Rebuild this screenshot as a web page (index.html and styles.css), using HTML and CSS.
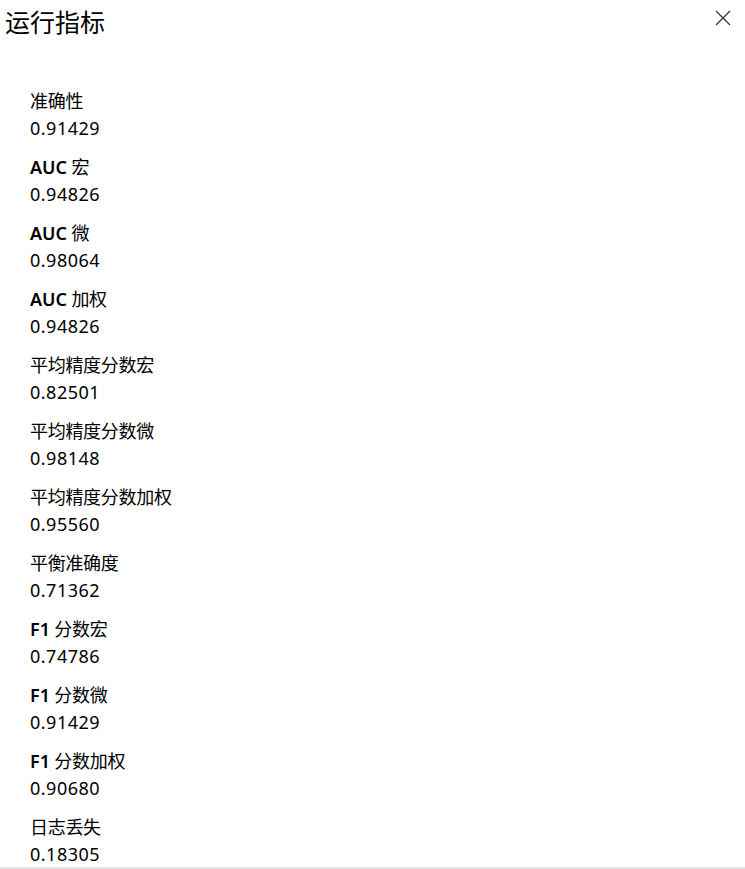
FILE: index.html
```html
<!DOCTYPE html>
<html lang="zh-CN">
<head>
<meta charset="utf-8">
<title>运行指标</title>
<link rel="stylesheet" href="styles.css">
</head>
<body>
<div class="panel">
  <div class="header">
    <h1 class="title">运行指标</h1>
    <button class="close" aria-label="关闭">
      <svg width="16" height="16" viewBox="0 0 16 16"><path d="M1 1L15 15M15 1L1 15" stroke="#323130" stroke-width="1.2" fill="none"/></svg>
    </button>
  </div>
  <div class="list">
    <div class="item"><div class="label">准确性</div><div class="value">0.91429</div></div>
    <div class="item"><div class="label"><span class="latin">AUC</span> 宏</div><div class="value">0.94826</div></div>
    <div class="item"><div class="label"><span class="latin">AUC</span> 微</div><div class="value">0.98064</div></div>
    <div class="item"><div class="label"><span class="latin">AUC</span> 加权</div><div class="value">0.94826</div></div>
    <div class="item"><div class="label">平均精度分数宏</div><div class="value">0.82501</div></div>
    <div class="item"><div class="label">平均精度分数微</div><div class="value">0.98148</div></div>
    <div class="item"><div class="label">平均精度分数加权</div><div class="value">0.95560</div></div>
    <div class="item"><div class="label">平衡准确度</div><div class="value">0.71362</div></div>
    <div class="item"><div class="label"><span class="latin">F1</span> 分数宏</div><div class="value">0.74786</div></div>
    <div class="item"><div class="label"><span class="latin">F1</span> 分数微</div><div class="value">0.91429</div></div>
    <div class="item"><div class="label"><span class="latin">F1</span> 分数加权</div><div class="value">0.90680</div></div>
    <div class="item"><div class="label">日志丢失</div><div class="value">0.18305</div></div>
  </div>
</div>
</body>
</html>
```
FILE: styles.css
```css
html, body {
  margin: 0;
  padding: 0;
  background: #ffffff;
}
body {
  font-family: "Noto Sans", "Noto Sans CJK SC", sans-serif;
  color: #201f1e;
}
.panel {
  height: 867px;
  border-bottom: 2px solid #e3e3e3;
  overflow: hidden;
}
.header {
  display: flex;
  justify-content: space-between;
  align-items: flex-start;
  padding: 5px 14px 0 5px;
}
.title {
  margin: 0;
  font-size: 25px;
  font-weight: 400;
  line-height: 34px;
  color: #000;
}
.close {
  border: 0;
  background: transparent;
  padding: 0;
  margin-top: 5px;
  width: 16px;
  height: 16px;
  display: flex;
}
.list {
  display: flex;
  flex-direction: column;
  gap: 12px;
  padding: 49px 0 0 30px;
}
.item {
  display: flex;
  flex-direction: column;
}
.label, .value {
  font-size: 18px;
  line-height: 27px;
  color: #000;
}
.label {
  letter-spacing: -0.3px;
}
.value {
  letter-spacing: 0.5px;
}
.latin {
  font-weight: 600;
  letter-spacing: 0;
}
```
